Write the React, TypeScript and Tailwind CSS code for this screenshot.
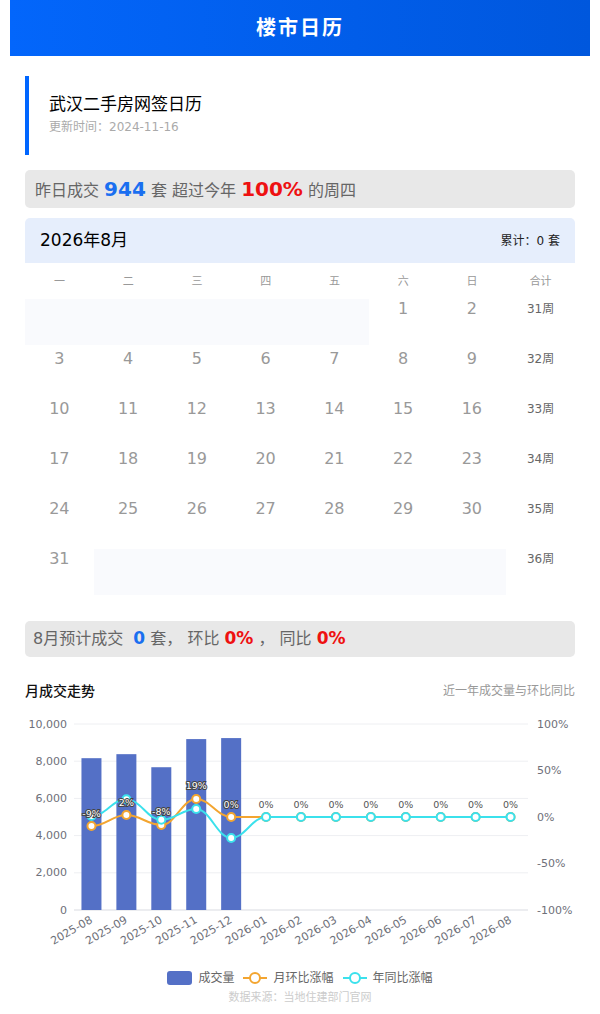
import React from "react";

const months = [
  "2025-08", "2025-09", "2025-10", "2025-11", "2025-12", "2026-01", "2026-02",
  "2026-03", "2026-04", "2026-05", "2026-06", "2026-07", "2026-08",
];
const volume: (number | null)[] = [8162, 8378, 7676, 9189, 9243, null, null, null, null, null, null, null, null];
const mom = [-9.7, 2.1, -8.6, 19.4, 0, 0, 0, 0, 0, 0, 0, 0, 0];
const yoy = [1, 19, -3, 8.6, -22.6, 0, 0, 0, 0, 0, 0, 0, 0];

// plot geometry (page coordinates)
const X0 = 74;
const X1 = 528;
const STEP = (X1 - X0) / months.length;
const Y_TOP = 724;
const Y_BOT = 910;
const cx = (i: number) => X0 + STEP * (i + 0.5);
const yVol = (v: number) => Y_BOT - (v / 10000) * (Y_BOT - Y_TOP);
const yPct = (p: number) => (Y_TOP + Y_BOT) / 2 - (p / 100) * ((Y_BOT - Y_TOP) / 2);

const ORANGE = "#f3a530";
const CYAN = "#3be1ec";
const BAR = "#5470c6";
const AXIS_FONT = "DejaVu Sans, Noto Sans CJK SC, sans-serif";

function smoothPath(pts: [number, number][]) {
  const slope = (i: number) => {
    const p = pts[i];
    const prev = pts[i - 1];
    const next = pts[i + 1];
    if (!prev || !next) return 0;
    if ((p[1] - prev[1]) * (next[1] - p[1]) <= 0) return 0;
    return (next[1] - prev[1]) / (next[0] - prev[0]);
  };
  let d = `M${pts[0][0]},${pts[0][1]}`;
  for (let i = 0; i < pts.length - 1; i++) {
    const a = pts[i];
    const b = pts[i + 1];
    const h = (b[0] - a[0]) * 0.4;
    const c1: [number, number] = [a[0] + h, a[1] + slope(i) * h];
    const c2: [number, number] = [b[0] - h, b[1] - slope(i + 1) * h];
    d += ` C${c1[0]},${c1[1]} ${c2[0]},${c2[1]} ${b[0]},${b[1]}`;
  }
  return d;
}

function TrendChart() {
  const orangePts = mom.map((v, i) => [cx(i), yPct(v)] as [number, number]);
  const cyanPts = yoy.map((v, i) => [cx(i), yPct(v)] as [number, number]);
  const leftTicks = [10000, 8000, 6000, 4000, 2000, 0];
  const rightTicks = [100, 50, 0, -50, -100];
  return (
    <svg width={600} height={259} className="block">
      <g transform="translate(0,-701)" fontFamily={AXIS_FONT}>
        {leftTicks.map((t) => (
          <g key={t}>
            {t !== 0 && (
              <line x1={X0} x2={X1} y1={yVol(t)} y2={yVol(t)} stroke="#eeeff2" strokeWidth={1} />
            )}
            <text x={67} y={yVol(t)} textAnchor="end" dominantBaseline="central" fontSize={11} fill="#6e7079">
              {t.toLocaleString("en-US")}
            </text>
          </g>
        ))}
        {rightTicks.map((t) => (
          <text key={t} x={537} y={yPct(t)} dominantBaseline="central" fontSize={11} fill="#6e7079">
            {t}%
          </text>
        ))}
        <line x1={X0} x2={X1} y1={Y_BOT} y2={Y_BOT} stroke="#d9dbe1" strokeWidth={1} />

        {volume.map((v, i) =>
          v == null ? null : (
            <rect key={i} x={cx(i) - 10} y={yVol(v)} width={20} height={Y_BOT - yVol(v)} fill={BAR} />
          )
        )}

        <path d={smoothPath(orangePts)} fill="none" stroke={ORANGE} strokeWidth={2} />
        {orangePts.map((p, i) => (
          <circle key={i} cx={p[0]} cy={p[1]} r={4} fill="#fff" stroke={ORANGE} strokeWidth={2} />
        ))}
        <path d={smoothPath(cyanPts)} fill="none" stroke={CYAN} strokeWidth={2} />
        {cyanPts.map((p, i) => (
          <circle key={i} cx={p[0]} cy={p[1]} r={4} fill="#fff" stroke={CYAN} strokeWidth={2} />
        ))}

        {mom.map((v, i) => {
          const label = `${Math.trunc(v)}%`;
          const onBar = volume[i] != null;
          return (
            <text
              key={i}
              x={cx(i)}
              y={orangePts[i][1] - 13}
              textAnchor="middle"
              dominantBaseline="central"
              fontSize={9.5}
              fill={onBar ? "#fff" : "#555"}
              stroke={onBar ? "#444" : "none"}
              strokeWidth={onBar ? 2 : 0}
              paintOrder="stroke"
            >
              {label}
            </text>
          );
        })}

        {months.map((m, i) => (
          <text
            key={m}
            x={cx(i)}
            y={919}
            textAnchor="end"
            dominantBaseline="central"
            fontSize={11}
            fill="#6e7079"
            transform={`rotate(-30 ${cx(i)} 919)`}
          >
            {m}
          </text>
        ))}
      </g>
    </svg>
  );
}

function LegendLine({ color }: { color: string }) {
  return (
    <svg width={24} height={14} className="block">
      <line x1={0} x2={24} y1={7} y2={7} stroke={color} strokeWidth={2} />
      <circle cx={12} cy={7} r={5} fill="#fff" stroke={color} strokeWidth={2} />
    </svg>
  );
}

const weeks: (number | null)[][] = [
  [null, null, null, null, null, 1, 2],
  [3, 4, 5, 6, 7, 8, 9],
  [10, 11, 12, 13, 14, 15, 16],
  [17, 18, 19, 20, 21, 22, 23],
  [24, 25, 26, 27, 28, 29, 30],
  [31, null, null, null, null, null, null],
];

export default function App() {
  return (
    <div className="w-[600px] min-h-[1014px] bg-white font-['DejaVu_Sans','Noto_Sans_CJK_SC',sans-serif]">
      <header className="mx-[10px] flex h-[56px] items-center justify-center bg-linear-to-r from-[#0366fb] to-[#0057dd] text-[20px] font-bold tracking-[2px] text-white">
        楼市日历
      </header>

      <div className="px-[25px]">
        <div className="mt-[20px] h-[79px] border-l-4 border-[#0066ff] pl-[20px] pt-[16px]">
          <div className="text-[17px] leading-[24px] text-black">武汉二手房网签日历</div>
          <div className="mt-[3px] text-[12px] leading-[16px] text-[#aaa]">更新时间：2024-11-16</div>
        </div>

        <div className="mt-[15px] flex h-[38px] items-center rounded-[5px] bg-[#e8e8e8] pl-[10px] text-[16px] text-[#666]">
          <div className="whitespace-pre">
            昨日成交 <span className="text-[20px] font-bold text-[#1a6ff0]">944</span> 套 超过今年{" "}
            <span className="text-[20px] font-bold text-[#ee1111]">100%</span> 的周四
          </div>
        </div>

        <div className="mt-[10px] flex h-[45px] items-center justify-between rounded-t-[5px] bg-[#e6eefc] px-[15px]">
          <span className="text-[17px] text-black">2026年8月</span>
          <span className="text-[12px] text-[#222]">累计：0 套</span>
        </div>

        <div className="grid h-[33px] grid-cols-8 pt-[11px] text-center text-[11px] leading-[16px] text-[#999]">
          {["一", "二", "三", "四", "五", "六", "日", "合计"].map((d) => (
            <div key={d}>{d}</div>
          ))}
        </div>

        {weeks.map((row, r) => (
          <div key={r} className="grid h-[50px] grid-cols-8">
            {row.map((d, c) =>
              d == null ? (
                <div key={c}>
                  <div className="mt-[3px] h-[46px] bg-[#f9fafd]" />
                </div>
              ) : (
                <div key={c} className="pt-[3px] text-center text-[16px] leading-[20px] text-[#999]">
                  {d}
                </div>
              )
            )}
            <div className="pt-[3px] text-center text-[12px] leading-[20px] text-[#666]">{31 + r}周</div>
          </div>
        ))}

        <div className="mt-[25px] flex h-[36px] items-center rounded-[5px] bg-[#e8e8e8] pl-[8px] text-[16px] text-[#666]">
          <div className="whitespace-pre">
            8月预计成交  <span className="text-[17px] font-bold text-[#1a6ff0]">0</span> 套， 环比{" "}
            <span className="text-[17px] font-bold text-[#ee1111]">0%</span> ， 同比{" "}
            <span className="text-[17px] font-bold text-[#ee1111]">0%</span>
          </div>
        </div>

        <div className="mt-[24px] flex h-[20px] items-center justify-between">
          <span className="text-[14px] font-medium text-[#111]">月成交走势</span>
          <span className="text-[12px] text-[#999]">近一年成交量与环比同比</span>
        </div>
      </div>

      <TrendChart />

      <div className="mt-[11px] flex h-[14px] items-center justify-center text-[12px] text-[#666]">
        <span className="h-[14px] w-[25px] rounded-[3px] bg-[#5470c6]" />
        <span className="ml-[6px]">成交量</span>
        <span className="ml-[9px]">
          <LegendLine color={ORANGE} />
        </span>
        <span className="ml-[6px]">月环比涨幅</span>
        <span className="ml-[9px]">
          <LegendLine color={CYAN} />
        </span>
        <span className="ml-[6px]">年同比涨幅</span>
      </div>
      <div className="mt-[6px] text-center text-[11px] leading-[14px] text-[#ccc]">数据来源：当地住建部门官网</div>
    </div>
  );
}
